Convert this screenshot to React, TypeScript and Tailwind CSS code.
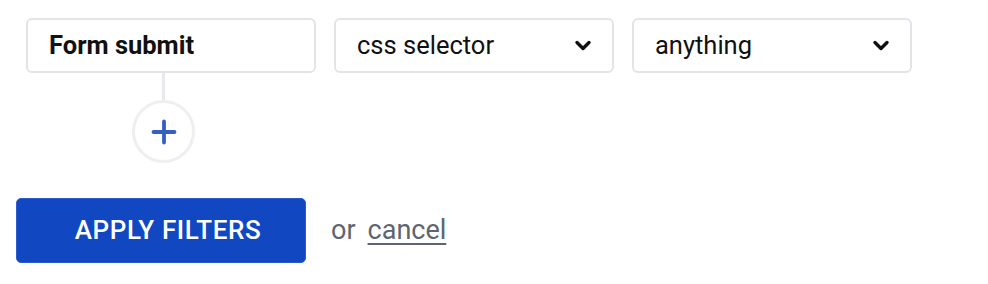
import React from "react";

function Chevron() {
  return (
    <svg width="18" height="12" viewBox="0 0 18 12" fill="none" className="shrink-0">
      <path d="M3 2.5 L9 8.5 L15 2.5" stroke="#111" strokeWidth="3.4" strokeLinecap="round" strokeLinejoin="round" />
    </svg>
  );
}

function Select({ label }: { label: string }) {
  return (
    <div className="flex h-[55px] w-[280px] items-center justify-between rounded-[6px] border-2 border-[#e4e4e8] bg-white pl-[21px] pr-[20px]">
      <span className="text-[25.5px] text-[#111]">{label}</span>
      <Chevron />
    </div>
  );
}

export default function App() {
  return (
    <div className="min-h-screen bg-white pl-[16px] pt-[18px]" style={{ fontFamily: "Roboto, 'Liberation Sans', sans-serif" }}>
      {/* Filter row */}
      <div className="flex items-start gap-[18px] pl-[10px]">
        <div className="flex flex-col">
          <div className="flex h-[55px] w-[290px] items-center rounded-[6px] border-2 border-[#e4e4e8] bg-white pl-[21px]">
            <span className="text-[25.5px] font-bold text-[#111]">Form submit</span>
          </div>
          <div className="ml-[136px] h-[27px] w-[3px] bg-[#e8e9ec]" />
          <button className="ml-[106px] flex h-[63px] w-[63px] items-center justify-center rounded-full border-[3px] border-[#eeeff1] bg-white">
            <svg width="26" height="26" viewBox="0 0 26 26" fill="none">
              <path d="M13 2.5 V23.5 M2.5 13 H23.5" stroke="#3560c2" strokeWidth="3.8" strokeLinecap="round" />
            </svg>
          </button>
        </div>
        <Select label="css selector" />
        <Select label="anything" />
      </div>

      {/* Actions */}
      <div className="mt-[35px] flex items-center">
        <button className="flex h-[65px] w-[290px] items-center justify-center rounded-[5px] border border-[#2a5cd0] bg-[#1148c2] pl-[14px] text-[26px] font-medium tracking-[0.6px] text-white">
          APPLY FILTERS
        </button>
        <span className="ml-[25px] text-[27px] text-[#5c6670]">or</span>
        <a href="#" className="ml-[12px] text-[27px] text-[#5c6670] underline decoration-[2px] underline-offset-[4px]">
          cancel
        </a>
      </div>
    </div>
  );
}
